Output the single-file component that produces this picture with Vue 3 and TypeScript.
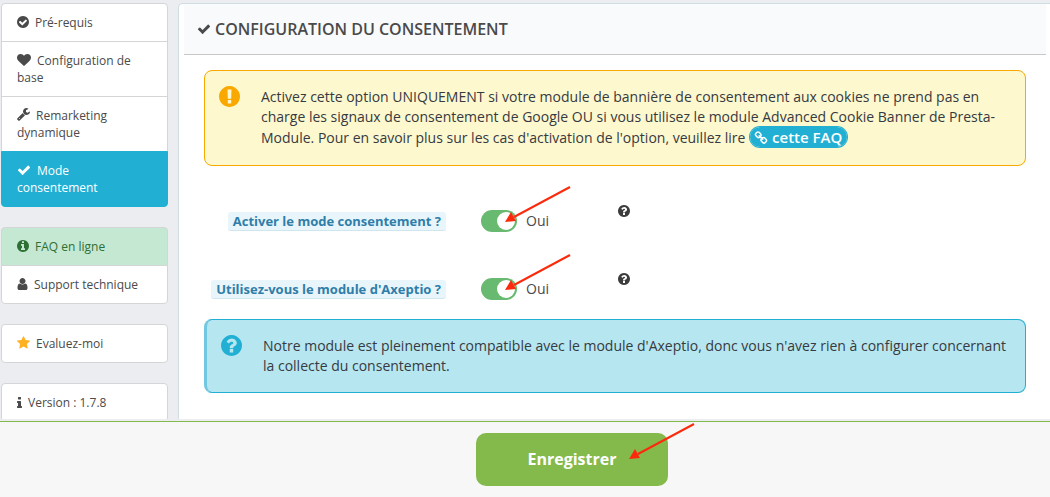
<script setup lang="ts">
import { ref } from 'vue'

interface Icon {
  box: string
  width: number
  height: number
  path: string
}

interface MenuItem {
  icon: string
  text: string
  state?: string
}

const disc =
  'q0 209-103 385.5t-279.5 279.5-385.5 103-385.5-103-279.5-279.5-103-385.5 103-385.5 279.5-279.5 385.5-103 385.5 103 279.5 279.5 103 385.5z'

const icons: Record<string, Icon> = {
  checkCircle: {
    box: '128 128 1536 1536',
    width: 12,
    height: 12,
    path: 'M1412 734q0-28-18-46l-91-90q-19-19-45-19t-45 19l-408 407-226-226q-19-19-45-19t-45 19l-91 90q-18 18-18 46 0 27 18 45l362 362q19 19 45 19 27 0 46-19l543-543q18-18 18-45zm252 162' + disc,
  },
  heart: {
    box: '0 128 1792 1536',
    width: 14,
    height: 12,
    path: 'M896 1664q-26 0-44-18l-624-602q-10-8-27.5-26t-55.5-65.5-68-97.5-53.5-121-23.5-138q0-220 127-344t351-124q62 0 126.5 21.5t120 58 95.5 68.5 76 68q36-36 76-68t95.5-68.5 120-58 126.5-21.5q224 0 351 124t127 344q0 221-229 450l-623 600q-18 18-44 18z',
  },
  wrench: {
    box: '64 128 1664 1664',
    width: 13,
    height: 13,
    path: 'M448 1472q0-26-19-45t-45-19-45 19-19 45 19 45 45 19 45-19 19-45zm644-420l-682 682q-37 37-90 37-52 0-91-37l-106-108q-38-36-38-90 0-53 38-91l681-681q39 98 114.5 173.5t173.5 114.5zm634-435q0 39-23 106-47 134-164.5 217.5t-258.5 83.5q-185 0-316.5-131.5t-131.5-316.5 131.5-316.5 316.5-131.5q58 0 121.5 16.5t107.5 46.5q16 11 16 28t-16 28l-293 169v224l193 107q5-3 79-48.5t135.5-81 70.5-35.5q15 0 23.5 10t8.5 25z',
  },
  check: {
    box: '0 256 1792 1408',
    width: 14,
    height: 11,
    path: 'M1671 566q0 40-28 68l-724 724-136 136q-28 28-68 28t-68-28l-136-136-362-362q-28-28-28-68t28-68l136-136q28-28 68-28t68 28l294 295 656-657q28-28 68-28t68 28l136 136q28 28 28 68z',
  },
  infoCircle: {
    box: '128 128 1536 1536',
    width: 12,
    height: 12,
    path: 'M1152 1376v-160q0-14-9-23t-23-9h-96v-512q0-14-9-23t-23-9h-320q-14 0-23 9t-9 23v160q0 14 9 23t23 9h96v320h-96q-14 0-23 9t-9 23v160q0 14 9 23t23 9h448q14 0 23-9t9-23zm-128-896v-160q0-14-9-23t-23-9h-192q-14 0-23 9t-9 23v160q0 14 9 23t23 9h192q14 0 23-9t9-23zm640 416' + disc,
  },
  user: {
    box: '256 128 1280 1536',
    width: 11,
    height: 12,
    path: 'M1536 1399q0 109-62.5 187t-150.5 78h-854q-88 0-150.5-78t-62.5-187q0-85 8.5-160.5t31.5-152 58.5-131 94-89 134.5-34.5q131 128 313 128t313-128q76 0 134.5 34.5t94 89 58.5 131 31.5 152 8.5 160.5zm-256-887q0 159-112.5 271.5t-271.5 112.5-271.5-112.5-112.5-271.5 112.5-271.5 271.5-112.5 271.5 112.5 112.5 271.5z',
  },
  star: {
    box: '64 32 1664 1632',
    width: 13,
    height: 13,
    path: 'M1728 647q0 22-26 48l-363 354 86 500q1 7 1 20 0 21-10.5 35.5t-30.5 14.5q-19 0-40-12l-449-236-449 236q-22 12-40 12-21 0-31.5-14.5t-10.5-35.5q0-6 2-20l86-500-364-354q-25-27-25-48 0-37 56-46l502-73 225-455q19-41 49-41t49 41l225 455 502 73q56 9 56 46z',
  },
  info: {
    box: '576 128 640 1408',
    width: 5,
    height: 11,
    path: 'M1216 1344v128q0 26-19 45t-45 19h-512q-26 0-45-19t-19-45v-128q0-26 19-45t45-19h64v-384h-64q-26 0-45-19t-19-45v-128q0-26 19-45t45-19h384q26 0 45 19t19 45v576h64q26 0 45 19t19 45zm-128-1152v192q0 26-19 45t-45 19h-256q-26 0-45-19t-19-45v-192q0-26 19-45t45-19h256q26 0 45 19t19 45z',
  },
}

const warningPath =
  'M896 128q209 0 385.5 103t279.5 279.5 103 385.5-103 385.5-279.5 279.5-385.5 103-385.5-103-279.5-279.5-103-385.5 103-385.5 279.5-279.5 385.5-103zm128 1247v-190q0-14-9-23.5t-22-9.5h-192q-13 0-23 10t-10 23v190q0 13 10 23t23 10h192q13 0 22-9.5t9-23.5zm-2-344l18-621q0-12-10-18-10-8-24-8h-220q-14 0-24 8-10 6-10 18l17 621q0 10 10 17.5t24 7.5h185q14 0 23.5-7.5t10.5-17.5z'
const questionPath =
  'M1024 1376v-192q0-14-9-23t-23-9h-192q-14 0-23 9t-9 23v192q0 14 9 23t23 9h192q14 0 23-9t9-23zm256-672q0-88-55.5-163t-138.5-116-170-41q-243 0-371 213-15 24 8 42l132 100q7 6 19 6 16 0 25-12 53-68 86-92 34-24 86-24 48 0 85.5 26t37.5 59q0 38-20 61t-68 45q-63 28-115.5 86.5t-52.5 125.5v36q0 14 9 23t23 9h192q14 0 23-9t9-23q0-19 21.5-49.5t54.5-49.5q32-18 49-28.5t46-35 44.5-48 28-60.5 12.5-81zm384 192' + disc
const linkPath =
  'M1520 1216q0-40-28-68l-208-208q-28-28-68-28-42 0-72 32 3 3 19 18.5t21.5 21.5 15 19 13 25.5 3.5 27.5q0 40-28 68t-68 28q-15 0-27.5-3.5t-25.5-13-19-15-21.5-21.5-18.5-19q-33 31-33 73 0 40 28 68l206 207q27 27 68 27 40 0 68-26l147-146q28-28 28-67zm-703-705q0-40-28-68l-206-207q-28-28-68-28-39 0-68 27l-147 146q-28 28-28 67 0 40 28 68l208 208q27 27 68 27 42 0 72-31-3-3-19-18.5t-21.5-21.5-15-19-13-25.5-3.5-27.5q0-40 28-68t68-28q15 0 27.5 3.5t25.5 13 19 15 21.5 21.5 18.5 19q33-31 33-73zm895 705q0 120-85 203l-147 146q-83 83-203 83-121 0-204-85l-206-207q-83-83-83-203 0-123 88-209l-88-88q-86 88-208 88-120 0-204-84l-208-208q-84-84-84-204t85-203l147-146q83-83 203-83 121 0 204 85l206 207q83 83 83 203 0 123-88 209l88 88q86-88 208-88 120 0 204 84l208 208q84 84 84 204z'

const groups: MenuItem[][] = [
  [
    { icon: 'checkCircle', text: 'Pré-requis' },
    { icon: 'heart', text: 'Configuration de base' },
    { icon: 'wrench', text: 'Remarketing dynamique' },
    { icon: 'check', text: 'Mode consentement', state: 'active' },
  ],
  [
    { icon: 'infoCircle', text: 'FAQ en ligne', state: 'success' },
    { icon: 'user', text: 'Support technique' },
  ],
  [{ icon: 'star', text: 'Evaluez-moi', state: 'rate' }],
  [{ icon: 'info', text: 'Version : 1.7.8', state: 'version' }],
]

const options = ref([
  { id: 'consent-mode', label: 'Activer le mode consentement ?', on: true },
  { id: 'axeptio', label: "Utilisez-vous le module d'Axeptio ?", on: true },
])
</script>

<template>
  <div class="page">
    <div class="main">
      <nav class="sidebar">
        <div v-for="(group, g) in groups" :key="g" class="group">
          <a v-for="item in group" :key="item.text" href="#" class="item" :class="item.state">
            <svg
              class="item-icon"
              :viewBox="icons[item.icon].box"
              :width="icons[item.icon].width"
              :height="icons[item.icon].height"
              aria-hidden="true"
            ><path :d="icons[item.icon].path" /></svg>{{ item.text }}
          </a>
        </div>
      </nav>

      <section class="panel">
        <h3 class="heading">
          <svg :viewBox="icons.check.box" width="14" height="11" aria-hidden="true"><path :d="icons.check.path" /></svg>
          CONFIGURATION DU CONSENTEMENT
        </h3>
        <div class="body">
          <div class="alert warning">
            <svg class="alert-icon" viewBox="128 128 1536 1536" aria-hidden="true"><path :d="warningPath" /></svg>
            <p>
              Activez cette option UNIQUEMENT si votre module de bannière de consentement aux cookies ne prend pas en
              charge les signaux de consentement de Google OU si vous utilisez le module Advanced Cookie Banner de
              Presta-Module. Pour en savoir plus sur les cas d'activation de l'option, veuillez lire
              <a href="#" class="pill"><svg viewBox="0 0 1792 1792" width="14" height="14" aria-hidden="true"><path :d="linkPath" /></svg>cette FAQ</a>
            </p>
          </div>

          <div class="rows">
            <div v-for="option in options" :key="option.id" class="row">
              <div class="label-cell"><label :for="option.id">{{ option.label }}</label></div>
              <div class="switch">
                <input :id="option.id" v-model="option.on" type="checkbox" />
                <span>{{ option.on ? 'Oui' : 'Non' }}</span>
                <svg class="arrow" viewBox="0 0 68 38" width="68" height="38" aria-hidden="true">
                  <path class="shaft" d="M65 2L9 32" /><path class="head" d="M0 37L6 27L11 36Z" />
                </svg>
              </div>
              <button type="button" class="help" aria-label="Aide">
                <svg viewBox="128 128 1536 1536" width="12" height="12" aria-hidden="true"><path :d="questionPath" /></svg>
              </button>
            </div>
          </div>

          <div class="alert note">
            <svg class="alert-icon" viewBox="128 128 1536 1536" aria-hidden="true"><path :d="questionPath" /></svg>
            <p>
              Notre module est pleinement compatible avec le module d'Axeptio, donc vous n'avez rien à configurer
              concernant la collecte du consentement.
            </p>
          </div>
        </div>
      </section>
    </div>

    <footer class="footer">
      <button type="button" class="save">
        Enregistrer
        <svg class="arrow" viewBox="0 0 68 38" width="68" height="38" aria-hidden="true">
          <path class="shaft" d="M65 2L9 32" /><path class="head" d="M0 37L6 27L11 36Z" />
        </svg>
      </button>
    </footer>
  </div>
</template>

<style>
body {
  margin: 0;
  background: #ebedf0;
}
</style>

<style scoped>
* {
  box-sizing: border-box;
}

.page {
  display: flex;
  flex-direction: column;
  height: 100vh;
  background: #ebedf0;
  color: #4a4a4a;
  font-family: 'Open Sans', 'Noto Sans', sans-serif;
  font-size: 14px;
  line-height: 20px;
}

svg {
  fill: currentColor;
}

.main {
  display: flex;
  flex: 1;
  gap: 10px;
  min-height: 0;
  margin-bottom: 2px;
  overflow: hidden;
}

.sidebar {
  display: flex;
  flex: none;
  flex-direction: column;
  gap: 20px;
  width: 168px;
  padding: 3px 0 0 1px;
}

.item {
  display: block;
  padding: 10px 15px;
  border: 1px solid #d3d5d7;
  background: #fff;
  color: #4a4a4a;
  font-size: 12px;
  line-height: 17px;
  text-decoration: none;
}

.item + .item {
  margin-top: -1px;
}

.item:first-child {
  border-top-left-radius: 4px;
  border-top-right-radius: 4px;
}

.item:last-child {
  border-bottom-right-radius: 4px;
  border-bottom-left-radius: 4px;
}

.item-icon {
  margin-right: 6px;
  vertical-align: -1px;
}

.item.active {
  border-color: #21afd3;
  background: #21afd3;
  color: #fff;
}

.item.success {
  background: #c5e8d2;
  color: #2e6f35;
}

.rate .item-icon {
  fill: #ffb121;
}

.panel {
  flex: 1;
  min-width: 0;
  margin-top: 3px;
  padding: 0 4px 0 5px;
  border: 1px solid #d0dde2;
  border-right: 0;
  border-bottom: 0;
  border-top-left-radius: 5px;
  background: #fff;
}

.heading {
  display: flex;
  align-items: center;
  gap: 4px;
  height: 51px;
  margin: 0;
  padding-left: 13px;
  border-bottom: 1px solid #c8c8c8;
  background: #f8fafc;
  font-size: 16px;
  font-weight: 600;
}

.body {
  padding: 15px 20px;
}

.alert {
  display: flex;
  gap: 21px;
  padding: 15px 14px 16px;
  border: 1px solid #f9a800;
  border-radius: 8px;
  color: #363a41;
}

.alert p {
  flex: 1;
  margin: 0;
  padding-top: 1px;
}

.alert-icon {
  flex: none;
  width: 21px;
  height: 21px;
}

.warning {
  padding-bottom: 17px;
  background: #fef8cf;
}

.warning .alert-icon {
  color: #f9a800;
}

.note {
  border-color: #21afd3;
  border-left: 3px solid #72c8e0;
  background: #b6e6f0;
}

.note .alert-icon {
  color: #21afd3;
}

.pill {
  margin: 0 1px;
  padding: 0 5px 0 4px;
  border-radius: 10px;
  background: #21afd3;
  box-shadow: 0 0 0 1px #21afd3;
  color: #fff;
  font-size: 15px;
  font-weight: 600;
  line-height: 20px;
  text-decoration: none;
  white-space: nowrap;
}

.pill svg {
  margin-right: 4px;
  vertical-align: -2px;
}

.rows {
  display: grid;
  gap: 8px;
  padding-top: 25px;
}

.row {
  display: grid;
  grid-template-columns: 242px 102px 1fr;
  column-gap: 35px;
  align-items: center;
  height: 60px;
}

.label-cell {
  text-align: right;
}

.label-cell label {
  display: inline-block;
  padding: 0 5px;
  border-bottom: 1px solid #cfe6ef;
  border-radius: 3px;
  background: #e8f5fa;
  color: #2f7ea9;
  font-size: 13px;
  font-weight: 700;
  line-height: 18px;
}

.switch {
  position: relative;
  display: flex;
  align-items: center;
  gap: 9px;
}

.switch input {
  display: flex;
  justify-content: flex-end;
  width: 36px;
  height: 22px;
  margin: 0;
  padding: 2px;
  border-radius: 11px;
  background: #68ba70;
  appearance: none;
}

.switch input:not(:checked) {
  justify-content: flex-start;
  background: #b3b7ba;
}

.switch input::before {
  width: 18px;
  height: 18px;
  border-radius: 50%;
  background: #fff;
  content: '';
}

.help {
  display: flex;
  align-self: start;
  justify-self: start;
  padding: 14px 0 0;
  border: 0;
  background: none;
  color: #3c3c3c;
}

.arrow {
  position: absolute;
  bottom: 9px;
  left: 24px;
  pointer-events: none;
}

.shaft {
  fill: none;
  stroke: #fb2a0c;
  stroke-width: 2;
}

.head {
  fill: #fb2a0c;
}

.footer {
  display: flex;
  flex: none;
  justify-content: center;
  padding: 11px 0 11px 94px;
  border-top: 1px solid #84ba4b;
  background: #f7f7f7;
}

.save {
  position: relative;
  width: 192px;
  height: 53px;
  padding: 0 0 1px;
  border: 0;
  border-radius: 10px;
  background: #84ba4b;
  color: #fff;
  font-family: inherit;
  font-size: 16px;
  font-weight: 700;
}

.save .arrow {
  bottom: 26px;
  left: 153px;
}
</style>
